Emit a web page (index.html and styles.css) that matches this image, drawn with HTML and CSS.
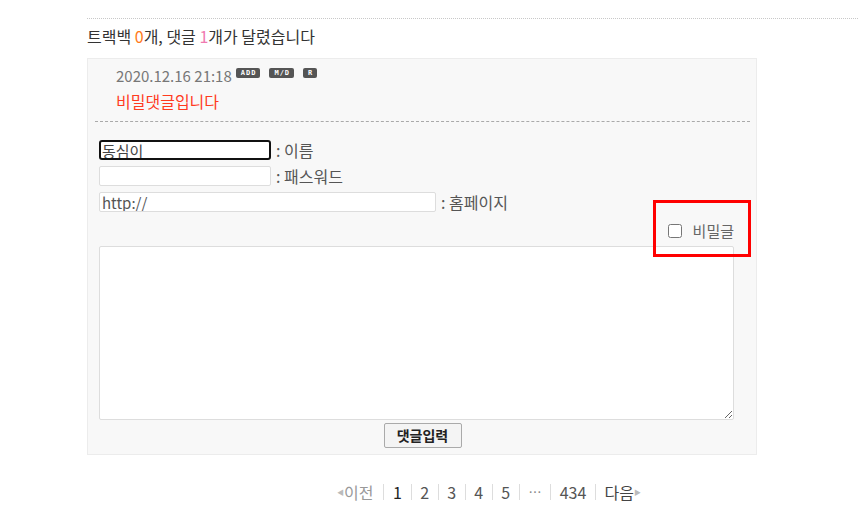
FILE: index.html
```html
<!DOCTYPE html>
<html>
<head>
  <title>댓글</title>
  <link rel="stylesheet" href="styles.css">
</head>
<body>
  <div class="wrap">
    <div class="comment-head">트랙백 <span class="cnt-tb">0</span>개, 댓글 <span class="cnt-cm">1</span>개가 달렸습니다</div>

    <div class="comment-box">
      <div class="comment-item">
        <div class="meta">
          <span class="date">2020.12.16 21:18</span>
          <span class="badge">ADD</span>
          <span class="badge">M/D</span>
          <span class="badge">R</span>
        </div>
        <div class="secret-text">비밀댓글입니다</div>
      </div>

      <form class="comment-form">
        <div class="field">
          <input type="text" class="inp short focused" value="동심이">
          <span class="lbl">: 이름</span>
        </div>
        <div class="field">
          <input type="password" class="inp short">
          <span class="lbl">: 패스워드</span>
        </div>
        <div class="field">
          <input type="text" class="inp long" value="http://">
          <span class="lbl">: 홈페이지</span>
        </div>
        <div class="secret-row">
          <label class="secret-chk"><input type="checkbox"> 비밀글</label>
        </div>
        <textarea class="body-text"></textarea>
        <div class="submit-row">
          <button type="button" class="btn">댓글입력</button>
        </div>
      </form>
    </div>

    <div class="paging">
      <span class="prev"><span class="arr">◀</span>이전</span>
      <span class="pg cur">1</span>
      <span class="pg">2</span>
      <span class="pg">3</span>
      <span class="pg">4</span>
      <span class="pg">5</span>
      <span class="pg dots">…</span>
      <span class="pg">434</span>
      <span class="pg next">다음<span class="arr">▶</span></span>
    </div>
  </div>
</body>
</html>
```

FILE: styles.css
```css
body {
  margin: 0;
  font-family: "Noto Sans CJK KR", "Noto Sans", sans-serif;
  font-size: 16px;
  color: #333;
  background: #fff;
}

.wrap {
  padding: 18px 0 0 87px;
}

.comment-head {
  border-top: 1px dotted #c8c8c8;
  padding-top: 6px;
  height: 33px;
  line-height: 22px;
  color: #333;
}

.cnt-tb { color: #ff7a1a; }
.cnt-cm { color: #f07ab0; }

.comment-box {
  width: 668px;
  height: 395px;
  background: #f8f8f8;
  border: 1px solid #ececec;
}

.comment-item {
  margin: 0 6px 0 7px;
  padding: 5px 0 9px 21px;
  border-bottom: 1px dashed #aaa;
}

.meta {
  display: flex;
  align-items: center;
  height: 22px;
}

.date {
  color: #777;
  font-size: 15px;
  margin-right: 4px;
}

.badge {
  display: inline-block;
  background: #555;
  color: #fff;
  font-family: "DejaVu Sans Mono", monospace;
  font-size: 7px;
  font-weight: bold;
  letter-spacing: 1px;
  line-height: 10px;
  padding: 0 4px 0 5px;
  border-radius: 2px;
  margin-right: 9px;
  margin-top: -5px;
}

.secret-text {
  color: #ff3b1f;
  line-height: 22px;
  margin-top: 4px;
}

.comment-form {
  padding: 18px 0 0 11px;
}

.field {
  display: flex;
  align-items: center;
  height: 20px;
  margin-bottom: 6px;
}

.inp {
  box-sizing: border-box;
  height: 20px;
  border: 1px solid #ddd;
  border-radius: 2px;
  background: #fff;
  padding: 0 2px;
  font-family: inherit;
  font-size: 15px;
  color: #555;
  outline: none;
}

.inp.short { width: 172px; }
.inp.long { width: 337px; }

.inp.focused {
  border: 2px solid #111;
  border-radius: 3px;
  color: #444;
  padding: 0 1px;
}

.lbl {
  color: #555;
  margin-left: 5px;
  line-height: 20px;
}

.secret-row {
  display: flex;
  justify-content: flex-end;
  padding-right: 22px;
  margin-top: 1px;
  height: 26px;
}

.secret-chk {
  position: relative;
  display: flex;
  align-items: center;
  color: #666;
  font-size: 15px;
  gap: 11px;
  line-height: 20px;
}

.secret-chk input {
  margin: 0;
  width: 14px;
  height: 14px;
}

.secret-chk::after {
  content: "";
  position: absolute;
  left: -15px;
  right: -17px;
  top: -18px;
  bottom: -13px;
  border: 3px solid #f00;
}

.body-text {
  display: block;
  box-sizing: border-box;
  width: 635px;
  height: 174px;
  margin-top: 2px;
  border: 1px solid #ddd;
  border-radius: 2px;
  background: #fff;
  resize: vertical;
}

.submit-row {
  width: 635px;
  padding-left: 12px;
  box-sizing: border-box;
  text-align: center;
  margin-top: 2px;
}

.btn {
  height: 25px;
  width: 78px;
  padding: 0;
  font-family: inherit;
  font-size: 14px;
  font-weight: bold;
  color: #222;
  background: #f4f4f4;
  border: 1px solid #aaa;
  border-radius: 2px;
}

.paging {
  display: flex;
  align-items: center;
  margin: 25px 0 0 250px;
  color: #555;
}

.paging .pg {
  border-left: 1px solid #ddd;
  padding: 0 8.6px;
  line-height: 16px;
}

.paging .prev {
  color: #999;
  padding-right: 10px;
}

.paging .cur { color: #222; }

.paging .dots { color: #888; font-size: 13px; }

.arr {
  font-size: 7px;
  color: #bbb;
  vertical-align: 4px;
}

.paging .next { padding-right: 0; color: #444; }
```
